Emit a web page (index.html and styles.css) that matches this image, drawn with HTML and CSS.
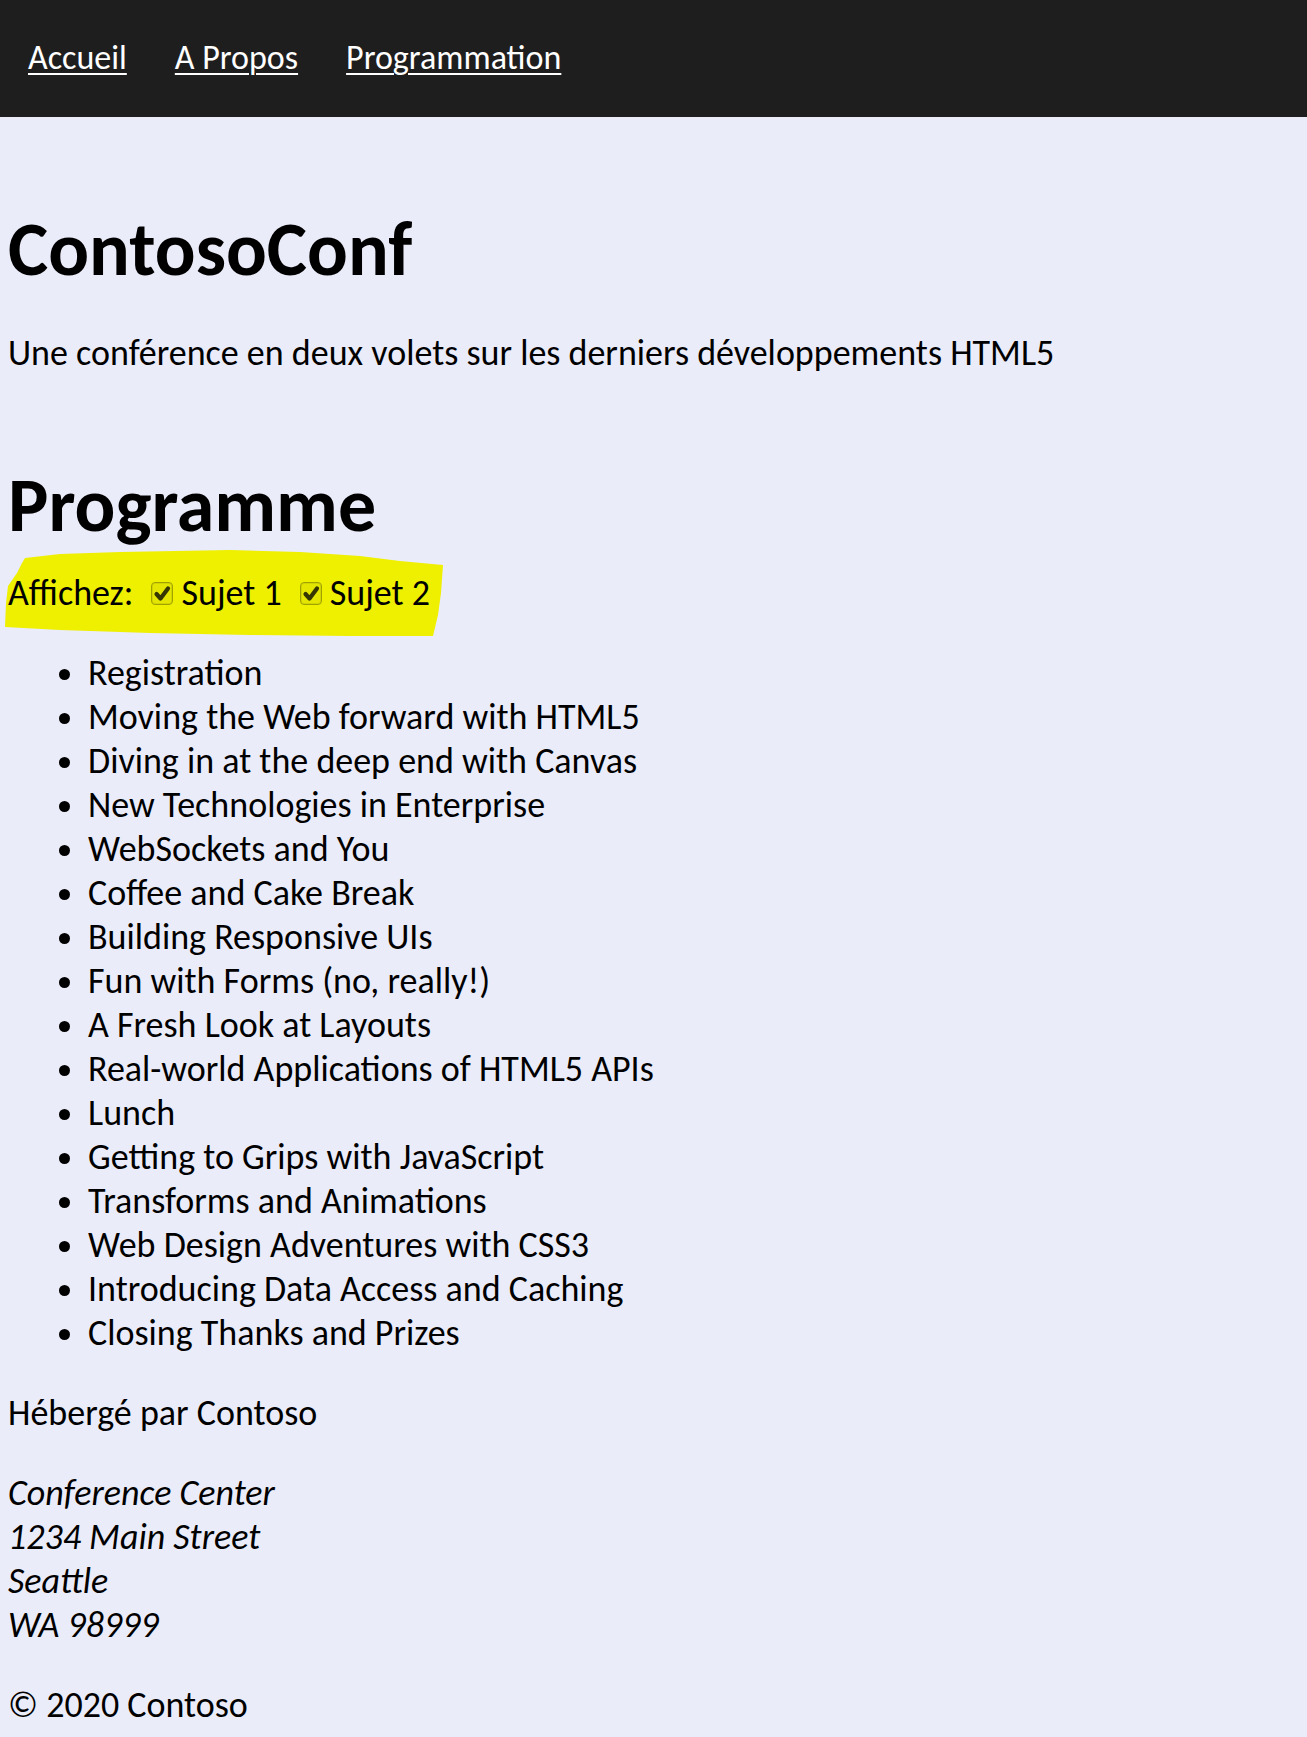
FILE: index.html
```html
<!DOCTYPE html>
<html lang="fr">
<head>
<meta charset="utf-8">
<title>ContosoConf</title>
<link rel="stylesheet" href="styles.css">
</head>
<body>
<nav class="site-nav">
  <a href="#">Accueil</a>
  <a href="#">A Propos</a>
  <a href="#">Programmation</a>
</nav>
<main class="page">
  <header class="intro">
    <h1 class="title">ContosoConf</h1>
    <p class="tagline">Une conférence en deux volets sur les derniers développements HTML5</p>
  </header>
  <section class="schedule">
    <h2 class="title">Programme</h2>
    <div class="filters">
      <svg class="highlight" viewBox="0 0 442 87" width="442" height="87" aria-hidden="true">
        <path d="M22 8 L57 4 L117 2 L227 0 L297 2 L357 6 L397 11 L440 15 L438 43 L435 65 L430 86 L347 86 L247 85 L147 83 L57 80 L2 77 L3 53 L5 36 L14 23 L19 13 Z" fill="#eef000"/>
      </svg>
      <div class="filters-row">
        <span>Affichez:</span>
        <label class="filter"><span class="check"><svg viewBox="0 0 20 21" width="20" height="21"><path d="M4.5 11 L8.5 15.5 L16 5.5" fill="none" stroke="#353500" stroke-width="4.2" stroke-linecap="round" stroke-linejoin="round"/></svg></span>Sujet 1</label>
        <label class="filter"><span class="check"><svg viewBox="0 0 20 21" width="20" height="21"><path d="M4.5 11 L8.5 15.5 L16 5.5" fill="none" stroke="#353500" stroke-width="4.2" stroke-linecap="round" stroke-linejoin="round"/></svg></span>Sujet 2</label>
      </div>
    </div>
    <ul class="sessions">
      <li>Registration</li>
      <li>Moving the Web forward with HTML5</li>
      <li>Diving in at the deep end with Canvas</li>
      <li>New Technologies in Enterprise</li>
      <li>WebSockets and You</li>
      <li>Coffee and Cake Break</li>
      <li>Building Responsive UIs</li>
      <li>Fun with Forms (no, really!)</li>
      <li>A Fresh Look at Layouts</li>
      <li>Real-world Applications of HTML5 APIs</li>
      <li>Lunch</li>
      <li>Getting to Grips with JavaScript</li>
      <li>Transforms and Animations</li>
      <li>Web Design Adventures with CSS3</li>
      <li>Introducing Data Access and Caching</li>
      <li>Closing Thanks and Prizes</li>
    </ul>
  </section>
  <footer class="site-footer">
    <p>Hébergé par Contoso</p>
    <address>Conference Center<br>1234 Main Street<br>Seattle<br>WA 98999</address>
    <p>© 2020 Contoso</p>
  </footer>
</main>
</body>
</html>
```

FILE: styles.css
```css
html, body {
  margin: 0;
  padding: 0;
}
body {
  background: #ebecf9;
  color: #000;
  font-family: "Carlito", "Lato", "Noto Sans", sans-serif;
  font-size: 36px;
  line-height: 44px;
}
.site-nav {
  background: #1e1e1e;
  height: 117px;
  box-sizing: border-box;
  padding: 36px 0 0 28px;
  display: flex;
  gap: 48px;
  font-size: 34px;
  line-height: 44px;
}
.site-nav a {
  color: #fff;
  text-decoration: underline;
  text-decoration-thickness: 2px;
  text-underline-offset: 4px;
}
.page {
  padding: 2px 8px 0;
}
.title {
  font-size: 76px;
  line-height: 92px;
  font-weight: bold;
}
.intro .title {
  margin: 84px 0 36px;
}
.tagline {
  margin: 36px 0;
}
.schedule .title {
  margin: 84px 0 20px;
}
.filters {
  position: relative;
}
.highlight {
  position: absolute;
  left: -5px;
  top: -21px;
  z-index: 0;
}
.filters-row {
  position: relative;
  z-index: 1;
  display: flex;
  align-items: center;
  gap: 18px;
}
.filter {
  display: flex;
  align-items: center;
  gap: 8px;
}
.check {
  flex: 0 0 auto;
  width: 20px;
  height: 21px;
  border: 1px solid #a0a200;
  border-radius: 4px;
  background: #e4e600;
  display: flex;
  box-shadow: inset 0 0 0 1px #d2d400;
}
.check svg {
  width: 20px;
  height: 21px;
}
.sessions {
  margin: 36px 0;
  padding-left: 80px;
}
.site-footer p {
  margin: 36px 0;
}
.site-footer address {
  font-style: italic;
  margin: 36px 0;
}
```
